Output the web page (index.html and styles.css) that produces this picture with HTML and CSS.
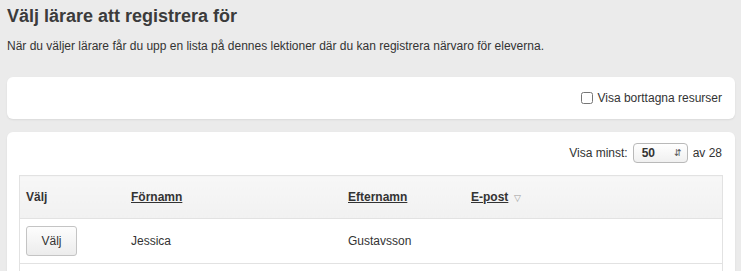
FILE: index.html
```html
<!DOCTYPE html>
<html lang="sv">
<head>
    <meta charset="UTF-8">
    <title>Välj lärare</title>
    <link rel="stylesheet" href="styles.css">
</head>
<body>

<div class="page">
    <h1>Välj lärare att registrera för</h1>
    <p class="intro">När du väljer lärare får du upp en lista på dennes lektioner där du kan registrera närvaro för eleverna.</p>

    <div class="panel filter-panel">
        <label class="check"><input type="checkbox"> Visa borttagna resurser</label>
    </div>

    <div class="panel list-panel">
        <div class="paging">
            Visa minst:
            <span class="select">50 <span class="arrows">&#8693;</span></span>
            av 28
        </div>

        <table class="teachers">
            <thead>
                <tr>
                    <th class="col-pick">Välj</th>
                    <th class="col-first"><a href="#">Förnamn</a></th>
                    <th class="col-last"><a href="#">Efternamn</a></th>
                    <th><a href="#">E-post</a> <span class="sort">&#9661;</span></th>
                </tr>
            </thead>
            <tbody>
                <tr>
                    <td><button type="button">Välj</button></td>
                    <td>Jessica</td>
                    <td>Gustavsson</td>
                    <td></td>
                </tr>
                <tr>
                    <td><button type="button" class="btn-top"></button></td>
                    <td></td>
                    <td></td>
                    <td></td>
                </tr>
            </tbody>
        </table>
    </div>
</div>

</body>
</html>
```

FILE: styles.css
```css
body {
    margin: 0;
    padding: 0;
    background: #ebebeb;
    font-family: 'Liberation Sans', Arial, sans-serif;
    color: #333;
    font-size: 12px;
}

.page {
    padding: 0 6px 0 7px;
}

h1 {
    margin: 0;
    padding-top: 5px;
    font-size: 18px;
    line-height: 22px;
    color: #3b3b3b;
}

.intro {
    margin: 0;
    padding-top: 12px;
    line-height: 15px;
    color: #333;
}

.panel {
    background: #fff;
    border-radius: 6px;
    box-shadow: 0 1px 2px rgba(0, 0, 0, 0.08);
}

.filter-panel {
    margin-top: 23px;
    height: 42px;
    display: flex;
    align-items: center;
    justify-content: flex-end;
    padding-right: 13px;
}

.check {
    display: flex;
    align-items: center;
    gap: 4px;
}

.check input {
    margin: 0;
    width: 12px;
    height: 12px;
}

.list-panel {
    margin-top: 13px;
    padding: 10px 12px 0 12px;
}

.paging {
    display: flex;
    justify-content: flex-end;
    align-items: center;
    gap: 5px;
    height: 21px;
    padding-right: 1px;
}

.select {
    display: inline-flex;
    justify-content: space-between;
    align-items: center;
    width: 40px;
    height: 18px;
    padding: 0 5px 0 8px;
    border: 1px solid #b9b9b9;
    border-radius: 4px;
    background: linear-gradient(#fff, #f0f0f0);
    font-weight: bold;
    font-size: 12px;
}

.select .arrows {
    font-weight: normal;
    font-size: 9px;
    color: #555;
}

.teachers {
    width: 100%;
    margin-top: 12px;
    border-collapse: collapse;
    border: 1px solid #e2e2e2;
}

.teachers th {
    height: 42px;
    padding: 0 6px;
    text-align: left;
    font-weight: bold;
    background: linear-gradient(#f7f7f7, #f1f1f1);
    border-bottom: 1px solid #e2e2e2;
}

.teachers th a {
    color: #333;
    text-decoration: underline;
}

.sort {
    font-size: 9px;
    color: #999;
    font-weight: normal;
    margin-left: 2px;
}

.col-pick { width: 93px; }
.col-first { width: 205px; }
.col-last { width: 111px; }

.teachers td {
    height: 44px;
    padding: 0 6px;
    border-bottom: 1px solid #e2e2e2;
}

button {
    width: 51px;
    height: 30px;
    font-family: 'Liberation Sans', Arial, sans-serif;
    font-size: 12px;
    color: #333;
    background: linear-gradient(#fdfdfd, #ececec);
    border: 1px solid #c4c4c4;
    border-radius: 3px;
    cursor: pointer;
}

.btn-top {
    display: block;
}
```
